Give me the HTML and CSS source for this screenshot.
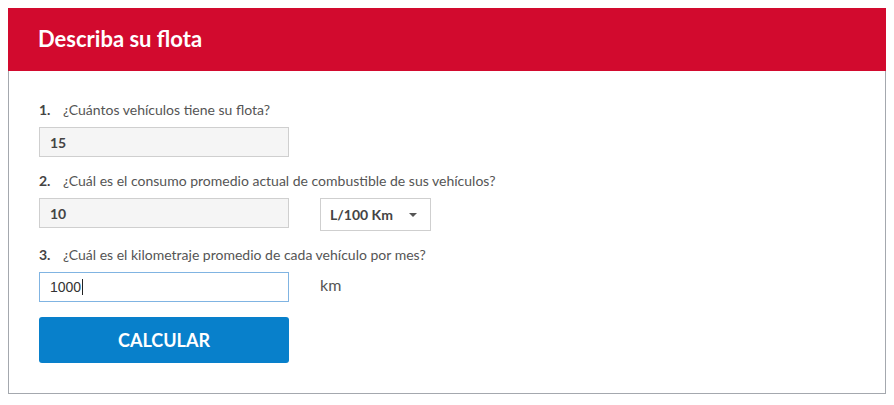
FILE: index.html
```html
<!DOCTYPE html>
<html lang="es">
<head>
    <meta charset="UTF-8">
    <meta name="viewport" content="width=device-width, initial-scale=1.0">
    <title>Describa su flota</title>
    <link rel="stylesheet" href="styles.css">
</head>
<body>

    <div class="panel">
        <div class="panel-header">
            <h2>Describa su flota</h2>
        </div>

        <div class="panel-body">
            <div class="question">
                <label class="q-label"><span class="q-num">1.</span>¿Cuántos vehículos tiene su flota?</label>
                <div class="q-row">
                    <input type="text" class="field" value="15">
                </div>
            </div>

            <div class="question">
                <label class="q-label"><span class="q-num">2.</span>¿Cuál es el consumo promedio actual de combustible de sus vehículos?</label>
                <div class="q-row">
                    <input type="text" class="field" value="10">
                    <div class="unit-select">
                        <span>L/100 Km</span>
                        <span class="caret"></span>
                    </div>
                </div>
            </div>

            <div class="question">
                <label class="q-label"><span class="q-num">3.</span>¿Cuál es el kilometraje promedio de cada vehículo por mes?</label>
                <div class="q-row">
                    <div class="field field-active">1000<span class="cursor"></span></div>
                    <span class="unit">km</span>
                </div>
            </div>

            <button class="btn-calc">CALCULAR</button>
        </div>
    </div>

</body>
</html>
```

FILE: styles.css
```css
body { margin: 8px; font-family: Lato, "Open Sans", sans-serif; background-color: #fff; color: #555; }
.panel { border: 1px solid #a4a8ae; border-top: none; }
.panel-header { background-color: #d20a2e; height: 63px; margin: 0 -1px 0 -1px; display: flex; align-items: center; padding-left: 30px; }
.panel-header h2 { margin: 0; color: #fff; font-size: 22px; font-weight: 700; padding-bottom: 2px; }
.panel-body { padding: 29px 30px 30px 30px; }
.question { margin-bottom: 14px; }
.q-label { display: block; font-size: 14px; line-height: 20px; color: #555; margin-bottom: 7px; }
.q-num { font-weight: 700; color: #444; display: inline-block; width: 24px; }
.q-row { display: flex; align-items: flex-start; gap: 31px; }
.field { box-sizing: border-box; width: 250px; height: 30px; padding: 0 10px; border: 1px solid #cfcfcf; background-color: #f5f5f5; font-family: Lato, sans-serif; font-size: 14px; font-weight: 700; color: #444; outline: none; }
.field-active { background-color: #fff; border-color: #80b4e2; display: flex; align-items: center; font-family: "Liberation Sans", Arial, sans-serif; font-weight: 400; color: #333; }
.cursor { display: inline-block; width: 1px; height: 16px; background-color: #222; margin-left: 1px; }
.unit-select { box-sizing: border-box; width: 111px; height: 33px; border: 1px solid #cfcfcf; background-color: #fff; display: flex; align-items: center; justify-content: space-between; padding: 0 13px 0 9px; font-size: 14px; font-weight: 700; color: #444; }
.caret { width: 0; height: 0; border-left: 4px solid transparent; border-right: 4px solid transparent; border-top: 4px solid #555; }
.unit { font-size: 16px; color: #555; line-height: 26px; }
.btn-calc { display: block; margin-top: 15px; width: 250px; height: 46px; border: none; border-radius: 3px; background-color: #0880cb; color: #fff; font-family: Lato, sans-serif; font-size: 18px; font-weight: 700; cursor: pointer; }
.btn-calc:hover { background-color: #0670b3; }
```
